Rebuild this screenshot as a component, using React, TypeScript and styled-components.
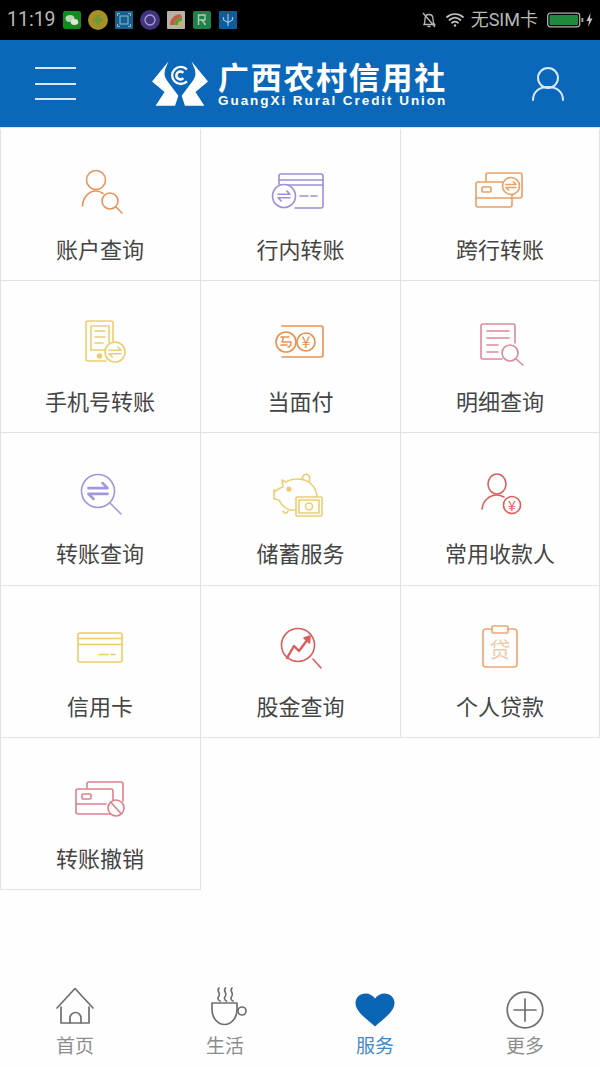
import React from 'react';
import styled, { createGlobalStyle } from 'styled-components';

const FONT = '"Noto Sans CJK SC", "Noto Sans", sans-serif';

const GlobalStyle = createGlobalStyle`
  html, body {
    margin: 0;
    padding: 0;
    background: #fefefe;
  }
  * {
    box-sizing: border-box;
  }
`;

const Page = styled.div`
  display: flex;
  flex-direction: column;
  width: 600px;
  height: 1067px;
  overflow: hidden;
  background: #fefefe;
  font-family: ${FONT};
`;

/* status bar */
const StatusBar = styled.div`
  display: flex;
  flex: none;
  align-items: center;
  height: 40px;
  padding-right: 7px;
  background: #000;
  color: #b9b9b9;
`;

const Time = styled.span`
  width: 62px;
  padding-left: 7px;
  font-family: Roboto, sans-serif;
  font-size: 19.5px;
  line-height: 40px;
`;

const AppIcons = styled.div`
  display: flex;
  align-items: center;
  gap: 6px;
`;

const StatusRight = styled.div`
  display: flex;
  align-items: center;
  margin-left: auto;
`;

const BellIcon = styled.svg`
  margin-right: 9px;
`;

const Carrier = styled.span`
  margin: 0 9px 0 7px;
  font-family: Roboto, ${FONT};
  font-size: 18px;
  line-height: 40px;
`;

/* header */
const Header = styled.header`
  display: flex;
  flex: none;
  align-items: center;
  height: 88px;
  padding: 0 36px 0 35px;
  background: #0a67b9;
  border-bottom: 1px solid #cfe8f6;
`;

const Burger = styled.div`
  display: flex;
  flex-direction: column;
  gap: 13.5px;
  width: 41px;
  span {
    height: 2px;
    background: #d6e8f6;
  }
`;

const Brand = styled.div`
  display: flex;
  align-items: center;
  gap: 10px;
  margin-left: 76px;
  padding-top: 2px;
  color: #fff;
`;

const BrandText = styled.div`
  display: flex;
  flex-direction: column;
  gap: 2px;
  width: 232px;
`;

const BrandTitle = styled.div`
  font-size: 31px;
  font-weight: 700;
  line-height: 30px;
  letter-spacing: 1.7px;
  white-space: nowrap;
`;

const BrandSub = styled.div`
  font-family: "Liberation Sans", sans-serif;
  font-size: 13.5px;
  font-weight: 700;
  line-height: 16px;
  letter-spacing: 1.95px;
  white-space: nowrap;
`;

const UserButton = styled.div`
  display: flex;
  margin-left: auto;
`;

/* service grid */
const Services = styled.main`
  display: grid;
  flex: 1;
  grid-template-columns: 201px 200px 199px;
  grid-auto-rows: 152.2px;
  align-content: start;
  padding-top: 1px;
`;

const Cell = styled.div`
  display: flex;
  flex-direction: column;
  align-items: center;
  padding-top: 31px;
  border-right: 1px solid #e2e2e2;
  border-bottom: 1px solid #e2e2e2;
  &:nth-child(3n + 1) {
    box-shadow: inset 1px 0 0 #e2e2e2;
  }
`;

const Label = styled.span`
  margin-top: 12px;
  color: #444;
  font-size: 22px;
  line-height: 32px;
  white-space: nowrap;
`;

const IconSvg = styled.svg<{ $color: string }>`
  flex: none;
  width: 60px;
  height: 60px;
  fill: none;
  stroke: ${(props) => props.$color};
  stroke-width: 1.6;
  stroke-linecap: round;
  stroke-linejoin: round;
  text {
    fill: ${(props) => props.$color};
    stroke: none;
    font-family: ${FONT};
    text-anchor: middle;
  }
`;

/* bottom nav */
const BottomNav = styled.nav`
  display: grid;
  flex: none;
  grid-template-columns: repeat(4, 150px);
  height: 89px;
  padding-top: 9px;
`;

const NavItem = styled.div<{ $active?: boolean }>`
  display: flex;
  flex-direction: column;
  align-items: center;
  color: ${(props) => (props.$active ? '#3f8ac6' : '#8d8d8d')};
  font-size: 19px;
  line-height: 24px;
  svg {
    width: 40px;
    height: 40px;
    margin-bottom: 6px;
    overflow: visible;
    fill: none;
    stroke: #6f6f6f;
    stroke-width: 1.7;
    stroke-linecap: round;
    stroke-linejoin: round;
  }
`;

const Swap = ({ x, y, s = 1 }: { x: number; y: number; s?: number }) => (
  <g transform={`translate(${x} ${y}) scale(${s})`}>
    <path d="M-6 -1.8H6L2.8 -5" />
    <path d="M6 1.8H-6L-2.8 5" />
  </g>
);

const AccountIcon = () => (
  <IconSvg viewBox="0 0 60 60" $color="#e8935c">
    <circle cx="26" cy="20" r="9.5" />
    <path d="M12.5 46C13 37 19 31 26 31C29 31 31 32 33 33.5" />
    <circle cx="40" cy="41" r="8" />
    <path d="M46 47L52 53" />
  </IconSvg>
);

const InnerTransferIcon = () => (
  <IconSvg viewBox="0 0 60 60" $color="#a08ed8">
    <path d="M8 24V16a2 2 0 0 1 2-2h40a2 2 0 0 1 2 2v30a2 2 0 0 1-2 2H24" />
    <path d="M8 20H52M8 25H52" />
    <path d="M29 36H37M40 36H46" />
    <circle cx="13" cy="36" r="11.5" fill="#fefefe" />
    <Swap x={13} y={36} />
  </IconSvg>
);

const CrossTransferIcon = () => (
  <IconSvg viewBox="0 0 60 60" $color="#e99f65">
    <path d="M16 21V15a2 2 0 0 1 2-2H50a2 2 0 0 1 2 2V36a2 2 0 0 1-2 2H43" />
    <rect x="6" y="22" width="36" height="25" rx="2" fill="#fefefe" />
    <path d="M6 38H42" />
    <rect x="12" y="27" width="9" height="5" rx="1" />
    <circle cx="41" cy="26" r="8.5" fill="#fefefe" />
    <Swap x={41} y={26} s={0.85} />
  </IconSvg>
);

const MobileTransferIcon = () => (
  <IconSvg viewBox="0 0 60 60" $color="#ecce72">
    <path d="M43 30V11a2 2 0 0 0-2-2H18a2 2 0 0 0-2 2V47a2 2 0 0 0 2 2H36" />
    <path d="M21 14H39V30M35 38H21V14" />
    <path d="M25 19H35M25 25H35M25 31H33" />
    <circle cx="29.5" cy="44" r="2" fill="#ecce72" />
    <circle cx="45" cy="40" r="10" fill="#fefefe" />
    <Swap x={45} y={40} />
  </IconSvg>
);

const FacePayIcon = () => (
  <IconSvg viewBox="0 0 60 60" $color="#e8914f">
    <path d="M11 14H50a2 2 0 0 1 2 2V43a2 2 0 0 1-2 2H11" />
    <circle cx="15" cy="30" r="10" fill="#fefefe" />
    <path d="M10 25H18M12.5 25L11 30H20C20 33 19 35 17 35M10 33H16" strokeWidth="1.5" />
    <circle cx="35" cy="30" r="9" fill="#fefefe" />
    <text x="35" y="36" fontSize="16">¥</text>
  </IconSvg>
);

const DetailIcon = () => (
  <IconSvg viewBox="0 0 60 60" $color="#db8a98">
    <path d="M32 47H13a2 2 0 0 1-2-2V14a2 2 0 0 1 2-2H43a2 2 0 0 1 2 2V31" />
    <path d="M17 19H39M17 26H39M17 33H28M17 40H28" />
    <circle cx="40" cy="41" r="8" fill="#fefefe" />
    <path d="M46 47L53 53" />
  </IconSvg>
);

const TransferQueryIcon = () => (
  <IconSvg viewBox="0 0 60 60" $color="#a596da">
    <circle cx="28" cy="27" r="16.5" />
    <path d="M40 39L51 50" />
    <Swap x={28} y={27} s={1.6} />
  </IconSvg>
);

const SavingsIcon = () => (
  <IconSvg viewBox="0 0 60 60" $color="#e9cf70">
    <path d="M46 32C45 22 37 15 27 15C22 15 18 16 15 18L11 16L12 23C8 24 6 26 5 27L3 26V35L8 36C10 41 14 44 19 46H24" />
    <path d="M32 16C30 12 34 9 37 11C39 12 39 15 38 18" />
    <path d="M12 47C13 50 16 50 17 47" />
    <circle cx="18" cy="25" r="1.8" fill="#e9cf70" />
    <rect x="25" y="33" width="26" height="19" rx="1" fill="#fefefe" />
    <path d="M28 36H48V49H28Z" />
    <circle cx="38" cy="42.5" r="3.5" />
  </IconSvg>
);

const PayeeIcon = () => (
  <IconSvg viewBox="0 0 60 60" $color="#da6060">
    <ellipse cx="27" cy="20" rx="9" ry="10" />
    <path d="M12 45C13 37 19 31 27 31C30 31 32 32 34 33" />
    <circle cx="42" cy="41" r="8.5" />
    <text x="42" y="46.5" fontSize="14">¥</text>
  </IconSvg>
);

const CreditCardIcon = () => (
  <IconSvg viewBox="0 0 60 60" $color="#edcb6a">
    <rect x="8" y="16" width="44" height="29" rx="2" />
    <path d="M8 21.5H52M8 27.5H52" />
    <path d="M29 37.5H38M41 37.5H45" />
  </IconSvg>
);

const StockIcon = () => (
  <IconSvg viewBox="0 0 60 60" $color="#da5e5e">
    <circle cx="27" cy="28" r="16.5" />
    <path d="M42 42L50 51" />
    <path d="M16 41L23 29L28 34L37 22" strokeWidth="2.4" />
    <path d="M33 21L39 19L38.5 26Z" fill="#da5e5e" />
  </IconSvg>
);

const LoanIcon = () => (
  <IconSvg viewBox="0 0 60 60" $color="#eba573">
    <path d="M22 12H16a3 3 0 0 0-3 3V47a3 3 0 0 0 3 3H44a3 3 0 0 0 3-3V15a3 3 0 0 0-3-3H38" />
    <rect x="22" y="9" width="16" height="7" rx="1" />
    <text x="30" y="40" fontSize="21" opacity="0.6">贷</text>
  </IconSvg>
);

const RevokeIcon = () => (
  <IconSvg viewBox="0 0 60 60" $color="#dc808c">
    <path d="M17 19V15a2 2 0 0 1 2-2H51a2 2 0 0 1 2 2V32" />
    <rect x="6" y="20" width="37" height="25" rx="2" fill="#fefefe" />
    <path d="M6 35H36" />
    <rect x="12" y="25" width="9" height="5" rx="1" />
    <circle cx="46" cy="39" r="8" fill="#fefefe" />
    <path d="M41 33.5L51 44.5" />
  </IconSvg>
);

const services = [
  { label: '账户查询', Icon: AccountIcon },
  { label: '行内转账', Icon: InnerTransferIcon },
  { label: '跨行转账', Icon: CrossTransferIcon },
  { label: '手机号转账', Icon: MobileTransferIcon },
  { label: '当面付', Icon: FacePayIcon },
  { label: '明细查询', Icon: DetailIcon },
  { label: '转账查询', Icon: TransferQueryIcon },
  { label: '储蓄服务', Icon: SavingsIcon },
  { label: '常用收款人', Icon: PayeeIcon },
  { label: '信用卡', Icon: CreditCardIcon },
  { label: '股金查询', Icon: StockIcon },
  { label: '个人贷款', Icon: LoanIcon },
  { label: '转账撤销', Icon: RevokeIcon },
];

const StatusApps = () => (
  <AppIcons>
    <svg width="20" height="20" viewBox="0 0 20 20">
      <rect x="1" y="1" width="18" height="18" rx="2" fill="#128a1f" />
      <ellipse cx="8" cy="8.5" rx="4.5" ry="3.6" fill="#b9d8b6" />
      <ellipse cx="12.5" cy="12" rx="3.8" ry="3" fill="#dbe8d6" />
    </svg>
    <svg width="20" height="20" viewBox="0 0 20 20">
      <circle cx="10" cy="10" r="10" fill="#a98f25" />
      <path d="M10 5V15M5 10H15" stroke="#6c9a35" strokeWidth="3.5" />
    </svg>
    <svg width="20" height="20" viewBox="0 0 20 20">
      <rect x="1" y="1" width="18" height="18" rx="1" fill="#15608f" />
      <rect x="6" y="6" width="8" height="8" fill="none" stroke="#8fb8cf" strokeWidth="1" />
      <path d="M3.5 6V3.5H6M14 3.5H16.5V6M16.5 14V16.5H14M6 16.5H3.5V14" fill="none" stroke="#8fb8cf" strokeWidth="1" />
    </svg>
    <svg width="20" height="20" viewBox="0 0 20 20">
      <circle cx="10" cy="10" r="10" fill="#43347f" />
      <circle cx="10" cy="10" r="5" fill="none" stroke="#a9a0cf" strokeWidth="1.3" />
    </svg>
    <svg width="20" height="20" viewBox="0 0 20 20">
      <rect x="1" y="1" width="18" height="18" rx="1" fill="#b7b2a8" />
      <path d="M4 15C4 9 8 5 14 4L16 7C11 8 8 11 8 15Z" fill="#c75c3c" />
      <path d="M8 15C8 11 11 8 16 7L16 11C13 11 12 13 12 15Z" fill="#5f9a45" />
      <path d="M12 15C12 13 13 11 16 11V15Z" fill="#d3b53c" />
    </svg>
    <svg width="20" height="20" viewBox="0 0 20 20">
      <rect x="1" y="1" width="18" height="18" rx="2" fill="#22804a" />
      <path d="M6.5 15V5H13V10H6.5M10 10L13.5 15" fill="none" stroke="#a8cfb5" strokeWidth="1.4" />
    </svg>
    <svg width="20" height="20" viewBox="0 0 20 20">
      <rect x="1" y="1" width="18" height="18" rx="1" fill="#0f5c9b" />
      <path d="M10 4V16M5.5 7V10L10 12.5L14.5 10V7" fill="none" stroke="#9cc0da" strokeWidth="1.2" />
    </svg>
  </AppIcons>
);

const StatusIndicators = () => (
  <StatusRight>
    <BellIcon width="16" height="18" viewBox="0 0 16 18" fill="none" stroke="#b9b9b9" strokeWidth="1.3">
      <path d="M3 13.5C4 12 4 10 4 8C4 5.5 5.5 3.5 8 3.5C10.5 3.5 12 5.5 12 8C12 10 12 12 13.5 13.5Z" />
      <path d="M6.5 15.5H9.5M2 2L14 16" />
    </BellIcon>
    <svg width="18" height="16" viewBox="0 0 18 16" fill="none" stroke="#c4c4c4" strokeWidth="1.7" strokeLinecap="round">
      <path d="M1 5C5.5 1 12.5 1 17 5M3.5 8C7 5 11 5 14.5 8M6 10.8C8 9.3 10 9.3 12 10.8" />
      <circle cx="9" cy="13.5" r="1.2" fill="#c4c4c4" stroke="none" />
    </svg>
    <Carrier>无SIM卡</Carrier>
    <svg width="46" height="16" viewBox="0 0 46 16">
      <rect x="0.7" y="1.2" width="32" height="13.6" rx="2.5" fill="none" stroke="#b0b0b0" strokeWidth="1.3" />
      <rect x="2.5" y="3" width="28.5" height="10" rx="1" fill="#1f8a3e" />
      <rect x="34.5" y="6" width="1.8" height="4" fill="#b0b0b0" />
      <path d="M43.5 1L39.5 9H42L41 15L45.5 6.5H43Z" fill="#c4c4c4" />
    </svg>
  </StatusRight>
);

const Logo = () => (
  <svg width="56" height="48" viewBox="22 17 170 144" fill="#fff">
    <path d="M72 18L62 42C58 54 60 66 68 76L102 122L92 152H33L60 110L22 78Z" />
    <path d="M142 18L152 42C156 54 154 66 146 76L112 122L122 152H181L154 110L192 78Z" />
    <circle cx="107" cy="60" r="33" fill="#0a67b9" />
    <path d="M128 42A26 26 0 1 0 128 78" fill="none" stroke="#fff" strokeWidth="7" />
    <path d="M117 52A12 12 0 1 0 117 68" fill="none" stroke="#fff" strokeWidth="8" />
  </svg>
);

const UserIcon = () => (
  <svg width="32" height="34" viewBox="0 0 32 34" fill="none" stroke="#d9eaf7" strokeWidth="2" strokeLinecap="round">
    <circle cx="16" cy="11" r="10" />
    <path d="M1 33C1 25 7 20 16 20C25 20 31 25 31 33" />
  </svg>
);

export default function App() {
  return (
    <Page>
      <GlobalStyle />
      <StatusBar>
        <Time>11:19</Time>
        <StatusApps />
        <StatusIndicators />
      </StatusBar>
      <Header>
        <Burger>
          <span />
          <span />
          <span />
        </Burger>
        <Brand>
          <Logo />
          <BrandText>
            <BrandTitle>广西农村信用社</BrandTitle>
            <BrandSub>GuangXi Rural Credit Union</BrandSub>
          </BrandText>
        </Brand>
        <UserButton>
          <UserIcon />
        </UserButton>
      </Header>
      <Services>
        {services.map(({ label, Icon }) => (
          <Cell key={label}>
            <Icon />
            <Label>{label}</Label>
          </Cell>
        ))}
      </Services>
      <BottomNav>
        <NavItem>
          <svg viewBox="0 0 40 40">
            <path d="M2 21L20 1.5L38 21" />
            <path d="M6 20V36H34V20" />
            <path d="M15 36V31a5.5 5.5 0 0 1 11 0V36" />
          </svg>
          首页
        </NavItem>
        <NavItem>
          <svg viewBox="0 0 40 40">
            <path d="M7 16H32V23C32 31 26 37.5 19.5 37.5C13 37.5 7 31 7 23Z" />
            <circle cx="37" cy="24" r="4" />
            <path d="M14 1C11 4 16 6 14 9C12 11 13 13 15 14" />
            <path d="M20.5 1C17.5 4 22.5 6 20.5 9C18.5 11 19.5 13 21.5 14" />
            <path d="M27 1C24 4 29 6 27 9C25 11 26 13 28 14" />
          </svg>
          生活
        </NavItem>
        <NavItem $active>
          <svg viewBox="0 0 40 40">
            <path
              d="M20 39.5C13 33 0.5 25 0.5 16C0.5 10.5 5 6.5 10.5 6.5C14.5 6.5 18 8.5 20 11.5C22 8.5 25.5 6.5 29.5 6.5C35 6.5 39.5 10.5 39.5 16C39.5 25 27 33 20 39.5Z"
              fill="#0a66b5"
              stroke="none"
            />
          </svg>
          服务
        </NavItem>
        <NavItem>
          <svg viewBox="0 0 40 40">
            <circle cx="20" cy="23" r="17.8" />
            <path d="M20 12V34M9 23H31" />
          </svg>
          更多
        </NavItem>
      </BottomNav>
    </Page>
  );
}
